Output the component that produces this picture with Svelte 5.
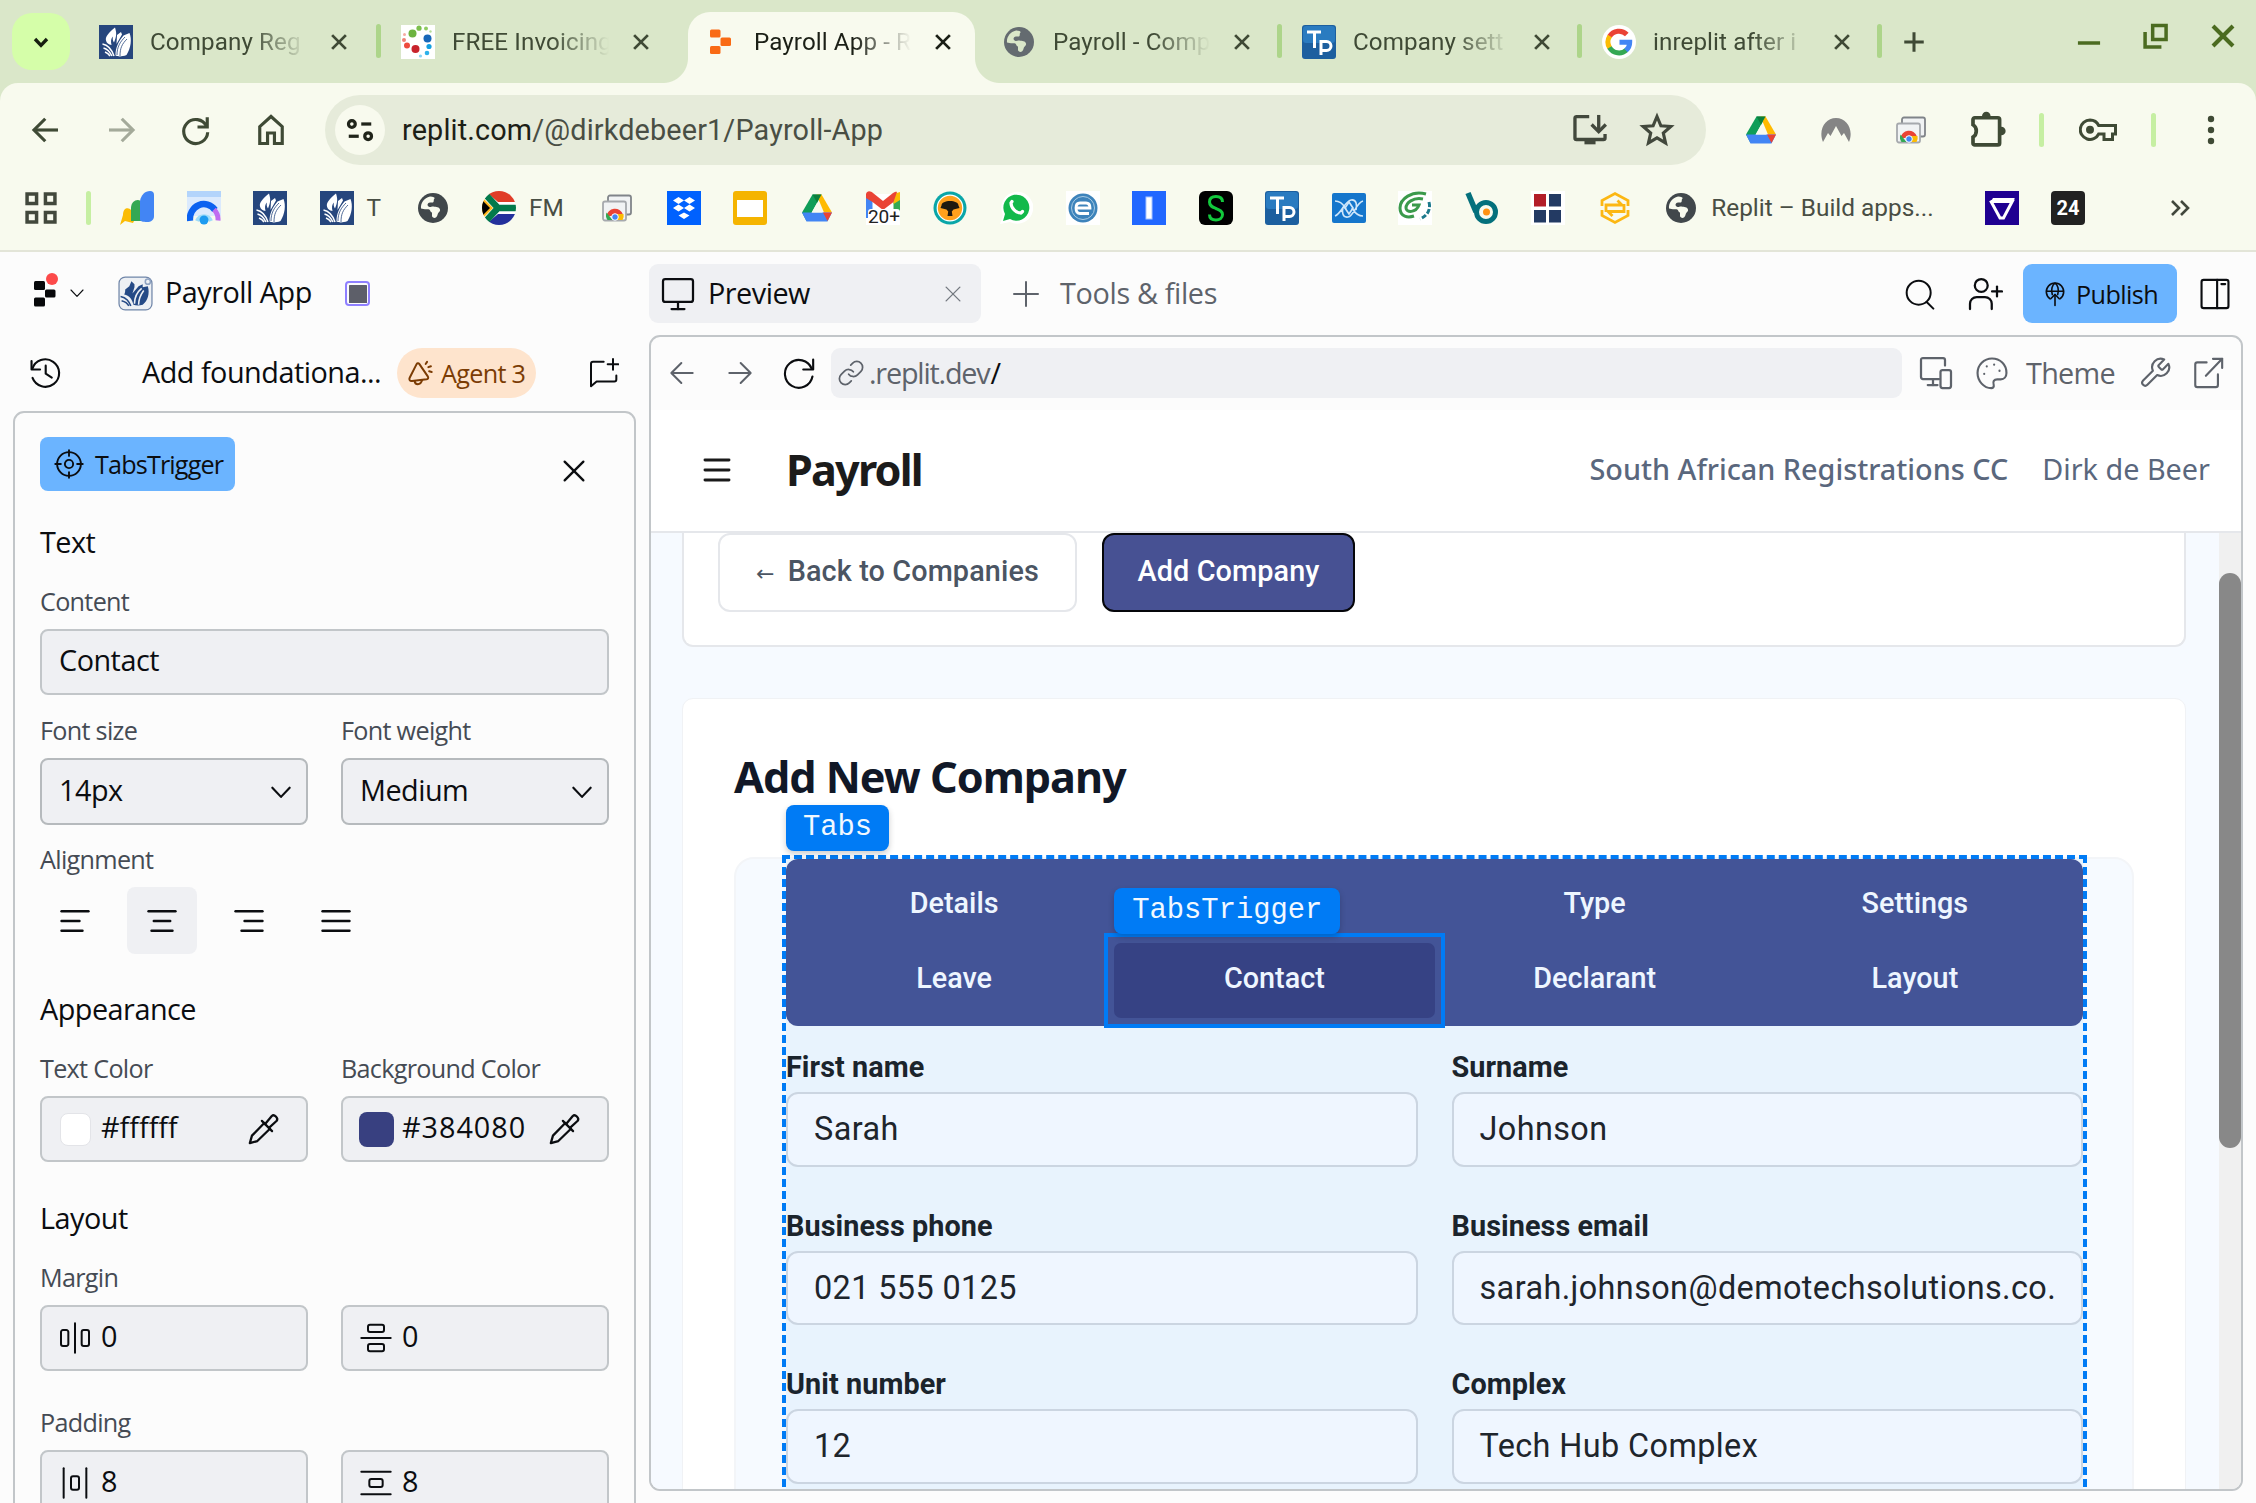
<script>
  const tabs = [
    { icon: 'book', title: 'Company Reg', width: 302 },
    { icon: 'dots', title: 'FREE Invoicing', width: 302 },
    { icon: 'replit', title: 'Payroll App - R', width: 299, active: true },
    { icon: 'globe', title: 'Payroll - Comp', width: 300, tone: 'grey' },
    { icon: 'tp', title: 'Company sett', width: 300 },
    { icon: 'google', title: 'inreplit after i', width: 300 }
  ];

  const bookmarks = [
    { icon: 'ads' },
    { icon: 'rainbow' },
    { icon: 'book' },
    { icon: 'book', label: 'T', size: 'short' },
    { icon: 'globe' },
    { icon: 'flag', label: 'FM', size: 'medium' },
    { icon: 'shots' },
    { icon: 'dropbox' },
    { icon: 'slides' },
    { icon: 'drive' },
    { icon: 'gmail' },
    { icon: 'tree' },
    { icon: 'whatsapp' },
    { icon: 'ering' },
    { icon: 'bar' },
    { icon: 'snake' },
    { icon: 'tp' },
    { icon: 'helix' },
    { icon: 'swirl' },
    { icon: 'bdot' },
    { icon: 'grid4' },
    { icon: 'hex' },
    { icon: 'globe', label: 'Replit – Build apps...', size: 'long' },
    { icon: 'vtri' },
    { icon: 'n24' }
  ];

  const triggers = ['Details', '', 'Type', 'Settings', 'Leave', 'Contact', 'Declarant', 'Layout'];

  const fields = [
    ['First name', 'Sarah'],
    ['Surname', 'Johnson'],
    ['Business phone', '021 555 0125'],
    ['Business email', 'sarah.johnson@demotechsolutions.co.'],
    ['Unit number', '12'],
    ['Complex', 'Tech Hub Complex']
  ];

  // Stroke icons on a 24-unit grid
  const strokes = {
    chevron: ['M4 8l8 8.5L20 8'],
    close: ['M4.5 4.5l15 15', 'M19.5 4.5l-15 15'],
    plus: ['M12 3v18', 'M3 12h18'],
    left: ['M20 12H4.5', 'M11.5 4.5L4 12l7.500 7.500'],
    right: ['M4 12h15.500', 'M12.500 4.500L20 12l-7.500 7.500'],
    history: ['M2.500 3.500v6h6', 'M3 9.200A9.700 9.700 0 1 1 3.200 15.500', 'M12.500 6.800v5.700l4.300 2.700'],
    chat: ['M12.500 3.500H4.500a1.500 1.500 0 0 0-1.500 1.500v17l4.200-3.700h13.300a1.500 1.500 0 0 0 1.500-1.500v-3', 'M19.500 1.500v8', 'M15.500 5.500h8'],
    agent: ['M10.500 4.200l7.300 10.700c.8 1.300.3 2.300-1 2.500l-12.500 1.500c-1.800.2-2.800-1.200-2-2.800L8 4.800c.6-1.200 1.800-1.500 2.500-.6z', 'M6.500 18.800c.3 3.600 5 4.200 6.500-.8', 'M16 4.300l1.200-1.800', 'M18.300 7l2.200-.8', 'M19 10.500l2.200.6'],
    target: ['M12 2.500a9.500 9.500 0 1 0 0 19 9.500 9.500 0 0 0 0-19z', 'M12 8.700a3.300 3.300 0 1 0 0 6.600 3.300 3.300 0 0 0 0-6.600z', 'M12 1v4.500', 'M12 18.500V23', 'M1 12h4.500', 'M18.500 12H23'],
    dropper: ['M12.200 7.800l-8.700 8.900-1.500 5.300 5.300-1.500 8.900-8.700', 'M10.500 6.300l7.200 7.200', 'M12.800 8.500l4.700-5.700c1.700-1.600 4.800 1.400 3.500 3.400l-5.500 5'],
    monitor: ['M3.500 2h17A1.500 1.500 0 0 1 22 3.500v12.300a1.500 1.500 0 0 1-1.500 1.500h-17A1.500 1.500 0 0 1 2 15.800V3.500A1.500 1.500 0 0 1 3.500 2z', 'M12 17.500V22', 'M7.700 22h8.600'],
    refresh: ['M22 2.500v7h-7', 'M21 9A9.800 9.800 0 1 0 21.500 14.500'],
    link: ['M10 13a5 5 0 0 0 7.540.54l3-3a5 5 0 0 0-7.070-7.070l-1.720 1.710', 'M14 11a5 5 0 0 0-7.540-.54l-3 3a5 5 0 0 0 7.070 7.070l1.710-1.710'],
    search: ['M11 2a9 9 0 1 0 0 18 9 9 0 0 0 0-18z', 'M17 18l5 5'],
    invite: ['M9.500 2a4.300 4.300 0 1 0 0 8.600 4.300 4.300 0 0 0 0-8.600z', 'M2 22v-3.500a4.500 4.500 0 0 1 4.500-4.500h5.500a4.500 4.500 0 0 1 4.500 4.500V22', 'M20 7v6.600', 'M16.700 10.300h6.600'],
    panel: ['M4 2h16a1.500 1.500 0 0 1 1.500 1.500v17A1.500 1.500 0 0 1 20 22H4a1.500 1.500 0 0 1-1.500-1.500v-17A1.500 1.500 0 0 1 4 2z', 'M13.500 2v20', 'M16.500 5h2.700'],
    publish: ['M7.500 16.500a8 8 0 1 1 9 0', 'M4.300 9.500h15.400', 'M9.500 12.500C8 8 9.500 3.500 12 2c2.500 1.500 4 6 2.500 10.500', 'M12 22.500v-10', 'M8.300 16.200l3.700-3.700 3.700 3.700'],
    devices: ['M14 16H3.300A1.300 1.300 0 0 1 2 14.700V3.300A1.300 1.300 0 0 1 3.300 2h13.400A1.300 1.300 0 0 1 18 3.300V7', 'M10 16v4', 'M6.500 20h6.500', 'M16.300 10h4.400a1.300 1.300 0 0 1 1.300 1.300v9.400a1.300 1.300 0 0 1-1.300 1.300h-4.400a1.300 1.300 0 0 1-1.300-1.300v-9.400a1.300 1.300 0 0 1 1.300-1.300z'],
    palette: ['M12 1.800C6.300 1.800 1.800 6.300 1.800 12S6.300 22.700 11.500 22.700c1.300 0 2-1 1.700-2.200-.8-2.500.2-4 2.500-4h2.500c2.300 0 4-1.800 4-4.500C22.200 6 17.700 1.800 12 1.800z', 'M8.300 7.200v.2', 'M13.500 6v.2', 'M17.300 10.300v.2', 'M6.500 12.500v.2'],
    wrench: ['M14.700 6.300a1 1 0 0 0 0 1.400l1.600 1.600a1 1 0 0 0 1.400 0l3.770-3.770a6 6 0 0 1-7.940 7.940l-6.910 6.910a2.120 2.120 0 0 1-3-3l6.910-6.910a6 6 0 0 1 7.940-7.940l-3.760 3.760z'],
    external: ['M11 4.500H4.500A1.500 1.500 0 0 0 3 6v14.500A1.500 1.500 0 0 0 4.500 22h13a1.500 1.500 0 0 0 1.500-1.500V13', 'M15.500 2h6.500v6.500', 'M22 2L10.500 14'],
    burger: ['M3 4.500h18', 'M3 12h18', 'M3 19.500h18'],
    alignLeft: ['M3 5.500h18', 'M3 12h12', 'M3 18.500h14'],
    alignCenter: ['M3 5.500h18', 'M6.500 12h11', 'M5 18.500h14'],
    alignRight: ['M3 5.500h18', 'M9 12h12', 'M7 18.500h14'],
    alignJustify: ['M3 5.500h18', 'M3 12h18', 'M3 18.500h18'],
    marginX: ['M3 6h2.500a1.500 1.500 0 0 1 1.500 1.500v9a1.500 1.500 0 0 1-1.500 1.500H3a1.500 1.500 0 0 1-1.500-1.500v-9A1.500 1.500 0 0 1 3 6z', 'M12 1v22', 'M18.500 6H21a1.500 1.500 0 0 1 1.500 1.500v9A1.500 1.500 0 0 1 21 18h-2.500a1.500 1.500 0 0 1-1.500-1.500v-9A1.500 1.500 0 0 1 18.500 6z'],
    marginY: ['M7.500 2h9a1.500 1.500 0 0 1 1.500 1.500V6a1.500 1.500 0 0 1-1.500 1.500h-9A1.500 1.500 0 0 1 6 6V3.500A1.500 1.500 0 0 1 7.500 2z', 'M1 12h22', 'M7.500 16.500h9A1.500 1.500 0 0 1 18 18v2.500a1.500 1.500 0 0 1-1.500 1.500h-9A1.500 1.500 0 0 1 6 20.500V18a1.500 1.500 0 0 1 1.500-1.500z'],
    padX: ['M3.500 1v22', 'M10.500 7h3a1.500 1.500 0 0 1 1.500 1.500v7a1.500 1.500 0 0 1-1.500 1.500h-3A1.500 1.500 0 0 1 9 15.500v-7A1.500 1.500 0 0 1 10.500 7z', 'M20.500 1v22'],
    padY: ['M1 3.500h22', 'M8.500 9h7a1.500 1.500 0 0 1 1.500 1.500v3a1.500 1.500 0 0 1-1.500 1.500h-7A1.500 1.500 0 0 1 7 13.500v-3A1.500 1.500 0 0 1 8.500 9z', 'M1 20.500h22'],
    reload: ['M19.500 3.500v6.500H13', 'M19 9.500A8 8 0 1 0 19.800 13.500'],
    home: ['M4.500 21V9.800L12 3l7.500 6.800V21h-5.200v-7H9.700v7z'],
    tune: ['M5.500 4.500a2.700 2.700 0 1 0 0 5.400 2.700 2.700 0 0 0 0-5.400z', 'M13 7.200h8', 'M18.500 14.200a2.700 2.700 0 1 0 0 5.400 2.700 2.700 0 0 0 0-5.400z', 'M3 17h8'],
    install: ['M11.500 3.500H3.500A1 1 0 0 0 2.500 4.500v12.500a1 1 0 0 0 1 1h17a1 1 0 0 0 1-1v-2.500', 'M8.500 20h7', 'M17.500 2.500v10', 'M13 8.500l4.500 4.500L22 8.500'],
    star: ['M12 3l2.600 6.200 6.600.5-5 4.400 1.500 6.500L12 17.200l-5.700 3.400 1.500-6.500-5-4.400 6.600-.5z'],
    puzzle: ['M5 5h13.200a1 1 0 0 1 1 1v13.500a1 1 0 0 1-1 1H5a1 1 0 0 1-1-1V16c2.500-1.500 2.500-5.500 0-7V6a1 1 0 0 1 1-1z', 'M10.200 4a1.400 1.400 0 0 1 2.800 0z', 'M20.200 11.200a1.400 1.400 0 0 1 0 2.800z'],
    apps: ['M3.200 3.200h6v6h-6z', 'M14.800 3.200h6v6h-6z', 'M3.200 14.800h6v6h-6z', 'M14.800 14.800h6v6h-6z'],
    more: ['M4 5l7 7-7 7', 'M13 5l7 7-7 7'],
    minimize: ['M2.500 18h19'],
    restore: ['M10 3h11.500v12H10z', 'M3.500 8.500v13h14']
  };
</script>

{#snippet line(name, size)}
  <svg class="line {size}" viewBox="0 0 24 24">
    {#each strokes[name] as d}<path {d} />{/each}
  </svg>
{/snippet}

{#snippet fav(kind, tone = '')}
  <svg class="fav {tone}" viewBox="0 0 34 34">
    {#if kind === 'book'}
      <rect width="34" height="34" fill="#26467d" />
      <path fill="#fff" d="M7 15.500c-1-4 3-8 9-13 1.500 5 2 8-1 15-1.500-2-1.500-4-1-6-2 2-2.500 4.500-1.500 8.500-3-.5-5-2-5.500-4.500zM18 10l4-3 1 2.500-5.500 9.500zM24.500 10.500l6-2.500c2.500 6 1.500 15-3 22-5 2-9 1.500-11 .5 0-8 3-14 8-20z" />
      <path fill="none" stroke="#fff" stroke-width="1.500" d="M3.500 19c6 1 9 5 11.500 12M4.500 23c4 1 6.500 4 8.500 8M6 27c2.500 1 4 2.500 5 4" />
      <path fill="none" stroke="#26467d" stroke-width=".8" d="M18 30c0-8 3-13 8-18M21 31c0-8 2-12 7-17" />
    {:else if kind === 'dots'}
      <rect width="34" height="34" fill="#fff" />
      <circle cx="11.500" cy="8.500" r="4" fill="#6cb33f" /><circle cx="26.500" cy="13.500" r="4" fill="#1767b8" />
      <circle cx="14.500" cy="24" r="4" fill="#c8232c" /><circle cx="6" cy="20.500" r="3" fill="#ee4b3d" />
      <circle cx="18" cy="3.200" r="2.600" fill="#7cbf4c" /><circle cx="25" cy="3.500" r="2" fill="#8fcb62" />
      <circle cx="28" cy="21.500" r="2.600" fill="#12a0e0" /><circle cx="26" cy="28" r="2.300" fill="#2cb1ea" />
      <circle cx="19.500" cy="31" r="1.600" fill="#8ad4f3" /><circle cx="3" cy="15" r="2" fill="#f08276" />
      <circle cx="3.500" cy="9.500" r="1.500" fill="#f6aaa2" /><circle cx="29.500" cy="6.500" r="1.200" fill="#b5dd97" />
    {:else if kind === 'replit'}
      <g fill="#f96a14"><rect x="7" y="4.500" width="10.500" height="8" rx="1.500" /><rect x="17.500" y="12.500" width="10.500" height="8.500" rx="1.500" /><rect x="7" y="21" width="10.500" height="8" rx="1.500" /></g>
    {:else if kind === 'globe'}
      <circle class="disc" cx="17" cy="17" r="15" />
      <path class="land" d="M14 5.500c-6 1.500-9.500 6.500-9 12 2 .8 5 .8 7.500.7 2 0 1.500 3 3.500 3.300v3.800c1.500 2.700 4.500 2 5.500-1.300.5-3 3-3 2.500-5.500-.5-2.500-4-2.500-6.500-3-2-.5-2.500 1.200-4.500.3-2.500-1.300-1.500-4 1-4.300h3c1.500-1 0-3 1.500-4 .5-1-1-1.700-4.500-2z" />
    {:else if kind === 'tp'}
      <rect width="34" height="34" rx="3" fill="#1c5f9f" /><rect x="1" y="1" width="32" height="17" rx="3" fill="#2a7bc0" />
      <path fill="none" stroke="#fff" stroke-width="3" d="M5 7h14M12.500 7v16M19 30V16.500h5.500a4.500 4.500 0 0 1 0 9H19" />
    {:else if kind === 'google'}
      <circle cx="17" cy="17" r="17" fill="#fff" />
      <g fill="none" stroke-width="5"><path stroke="#ea4335" d="M24.800 9.500A11 11 0 0 0 7.500 11.500" /><path stroke="#fbbc05" d="M7.800 11A11 11 0 0 0 7.800 23" /><path stroke="#34a853" d="M7.500 22.500a11 11 0 0 0 17 2.500" /><path stroke="#4285f4" d="M24 25.500A11 11 0 0 0 27.700 17.300H17.500" /></g>
    {:else if kind === 'ads'}
      <path fill="#fbbc04" d="M0 34l3-10c0-8 6-8 8-5l4 9-2 4-8-2z" /><path fill="#34a853" d="M11 30V17c0-9 11-11 11-3v16z" /><path fill="#4285f4" d="M20 29V10c1-6 5-10 10-10a4 4 0 0 1 4 4v21c0 4-3 6-7 6s-7-1-7-2z" />
    {:else if kind === 'rainbow'}
      <rect width="34" height="9" fill="#b3d4fb" /><rect y="6" width="34" height="19" fill="#dbeafd" /><path fill="none" stroke="#0b62f0" stroke-width="6.500" d="M3 30a14 15 0 0 1 25-11" /><path fill="none" stroke="#c06cf0" stroke-width="5" d="M27 18.500a14 14 0 0 1 4 11" /><path fill="none" stroke="#9fdcf8" stroke-width="4" d="M10 30a7.500 7.500 0 0 1 14 0" /><circle cx="17" cy="29" r="4.500" fill="#1d9bf0" />
    {:else if kind === 'flag'}
      <clipPath id="round"><circle cx="17" cy="17" r="17" /></clipPath>
      <g clip-path="url(#round)"><rect width="34" height="34" fill="#fff" /><path fill="#e03c27" d="M3 0h31v11H16z" /><path fill="#23309c" d="M3 34h31V23H16z" /><path fill="none" stroke="#037a4b" stroke-width="6.500" d="M2 2l14 15h18M2 32l14-15" /><path fill="#ffb81c" d="M0 6l11 11L0 28z" /><path fill="#000" d="M0 9l8 8-8 8z" /></g>
    {:else if kind === 'shots'}
      <g fill="#f1f3f4" stroke="#808489" stroke-width="1.800"><rect x="8" y="4.500" width="23" height="19" rx="2" /><rect x="3" y="10.500" width="23" height="19" rx="2" stroke="#a6a9ad" /></g>
      <path fill="#ea4335" d="M6.500 25.500a8.500 8.500 0 0 1 16.500-2l-8 1z" /><path fill="#34a853" d="M6.500 21.500l6 7.500H7.500a8 8 0 0 1-1-7.500z" /><path fill="#fbbc04" d="M16 23h7.500a8 8 0 0 1-1 6h-6z" /><circle cx="15" cy="26" r="3.300" fill="#4285f4" stroke="#fff" />
    {:else if kind === 'dropbox'}
      <rect width="34" height="34" fill="#0061fe" /><g fill="#fff"><path d="M11.500 6l5.500 3.500-5.500 3.500L6 9.500zM22.500 6L28 9.500 22.500 13 17 9.500zM11.500 13.500L17 17l-5.500 3.500L6 17zM22.500 13.500L28 17l-5.500 3.500L17 17zM17 21.500l5.500 3-5.500 3.500-5.500-3.500z" /></g>
    {:else if kind === 'slides'}
      <rect width="34" height="34" rx="3" fill="#f5b400" /><rect x="4" y="9" width="26" height="17" fill="#fff" />
    {:else if kind === 'drive'}
      <path fill="#0f9d58" d="M12.500 3.500h9L17 12l-5 9-5.500 9L2 21.500z" /><path fill="#ffba00" d="M16.500 3.500h5L32 21.500h-8z" /><path fill="#0b7f3c" d="M12.500 3.500h9L17 11.500z" /><path fill="#4285f4" d="M2 21.500h30L27.500 30.500h-21z" /><path fill="#ea4335" d="M23 21.500h9l-4.500 8.500z" />
      <path class="hole" d="M17 12l5.300 9.500H11.700z" />
    {:else if kind === 'gmail'}
      <rect y="3" width="34" height="31" fill="#fff" /><path fill="#4285f4" d="M0 5h6.500v22H0z" /><path fill="#34a853" d="M27.500 8H34v18h-6.500z" /><path fill="#fbbc04" d="M27.500 3l6.500-2v8l-6.500 4z" /><path fill="#ea4335" d="M0 3C1-1 5 0 7 2l10 8 10-8c2-1 3-1.500 4-1L27.500 11 17 19 6.500 11 0 7z" />
      <rect x="2" y="18" width="32" height="16" rx="3" fill="#fff" /><text x="18" y="32" text-anchor="middle">20+</text>
    {:else if kind === 'tree'}
      <circle cx="17" cy="17" r="16.500" fill="#0aa6a8" /><circle cx="17" cy="17" r="12.800" fill="#ffa11d" stroke="#fff" stroke-width="1.200" /><path fill="#1f1a10" d="M8.500 14.500c0-3 4-4.500 8.500-4.500s8.500 1.500 8.500 4.500l1 2.500-6 1.500-1.700 2 .7 4.500h-5l.7-4.500-1.700-2-6-1.500z" />
    {:else if kind === 'whatsapp'}
      <path fill="#fff" d="M1 33l3-9A16 16 0 1 1 11 31z" /><path fill="#12b94b" d="M4 30l2-7a13 13 0 1 1 5 5z" /><path fill="none" stroke="#fff" stroke-width="3.200" stroke-linecap="round" d="M12 12c0 5 5 10 10 10M12 12l1-1.500M22 22l1.500-1.500" />
    {:else if kind === 'ering'}
      <rect width="34" height="34" fill="#fff" /><circle cx="17" cy="17" r="14.500" fill="#3d83bb" /><circle cx="17" cy="17" r="11.500" fill="none" stroke="#a9cbe4" /><path fill="none" stroke="#fff" stroke-width="2.800" d="M10 17h14c0-3-1-5-4-5h-6c-3 0-4 2-4 5s1 5.500 4 5.500h9" />
    {:else if kind === 'bar'}
      <rect width="34" height="34" fill="#2167ff" /><rect x="14" y="6" width="6" height="22" fill="#fff" stroke="#a9c5ff" />
    {:else if kind === 'snake'}
      <rect width="34" height="34" rx="6" fill="#000" /><path fill="none" stroke="#12c83c" stroke-width="3" d="M23.500 11c0-4-3-5.500-6.500-5.500s-6.500 1.500-6.500 5.500 3 5 6.500 6.500 6.500 2.500 6.500 6-3 5.500-6.500 5.500-6.500-1.500-6.500-5.500" />
    {:else if kind === 'helix'}
      <rect y="2" width="34" height="30" rx="2" fill="#1576cc" /><g fill="none" stroke="#cfe6fa" stroke-width="1.700"><path d="M3 10c7 0 9 5 11 8M3 25c6-2 10-15 16-16s6 6 5 10M31 10c-7 2-9 15-15 16s-6-6-5-10M31 25c-7 0-9-5-11-8" /><path d="M13 17l4-6 4 6-4 6z" /></g>
    {:else if kind === 'swirl'}
      <rect width="34" height="34" fill="#fff" /><g fill="none" stroke="#3b9a4b" stroke-width="3"><path d="M28 3C14-1 2 8 2 17s8 10 14 8" /><path d="M25 8C15 6 8 12 8 17s10 5 13-3H14" /></g><path fill="none" stroke="#1d7a8c" stroke-width="3" stroke-dasharray="5 2" d="M31 11c2 8-2 14-9 17" />
    {:else if kind === 'bdot'}
      <path fill="none" stroke="#04707c" stroke-width="5.500" d="M3 2l8 19" /><circle cx="21" cy="21" r="9.500" fill="none" stroke="#04707c" stroke-width="5" /><circle cx="21.500" cy="21" r="3.500" fill="#ff9212" />
    {:else if kind === 'grid4'}
      <rect width="34" height="34" fill="#fff" /><rect x="3" y="3" width="12" height="12.500" fill="#b31d28" /><g fill="#233a63"><rect x="18" y="3" width="12" height="12.500" /><rect x="3" y="19" width="12" height="12.500" /><rect x="18" y="19" width="12" height="12.500" /></g>
    {:else if kind === 'hex'}
      <g fill="none" stroke="#fcb713" stroke-width="2.800"><path d="M4 15V9.500l13-7 13 7V15M4 19v5.500l13 7 13-7V19" /><path d="M8 21v-7h16l-4.500-4.500M26 13v7.500H10l4.500 4.500" /></g>
    {:else if kind === 'vtri'}
      <rect width="34" height="34" fill="#1f0091" /><path fill="none" stroke="#fff" stroke-width="3" d="M5.500 9.500L15 27h3.500L28.500 8" /><path fill="#fff" d="M8 7h22l-4.500 5H5z" />
    {:else if kind === 'n24'}
      <rect width="34" height="34" rx="4" fill="#222" /><text class="light" x="17" y="24" text-anchor="middle">24</text>
    {:else if kind === 'nord'}
      <path fill="#858585" d="M4 29C-1 17 6 5 17 5s18 12 13 24l-5-9-2.500 3L17 13l-5.500 10L9 20z" />
    {/if}
  </svg>
{/snippet}

<div class="browser">
  <div class="strip">
    <div class="tab-search">{@render line('chevron', 's18')}</div>
    <div class="tabs">
      {#each tabs as tab}
        <div class="tab" class:active={tab.active} style:width="{tab.width}px">
          {#if tab.active}<i class="flare"></i><i class="flare end"></i>{/if}
          {@render fav(tab.icon, tab.tone)}
          <span class="tab-title">{tab.title}</span>
          {@render line('close', 's22')}
        </div>
      {/each}
    </div>
    <div class="new-tab">{@render line('plus', 's26')}</div>
    <div class="window-controls">
      {@render line('minimize', 's28')}
      {@render line('restore', 's28')}
      {@render line('close', 's32')}
    </div>
  </div>

  <div class="toolbar">
    <div class="nav">
      {@render line('left', 's36')}
      <span class="dim">{@render line('right', 's36')}</span>
      {@render line('reload', 's36')}
      {@render line('home', 's36')}
    </div>
    <div class="omnibox">
      <span class="site">{@render line('tune', 's30')}</span>
      <span class="url"><b>replit.com</b>/@dirkdebeer1/Payroll-App</span>
      {@render line('install', 's38')}
      {@render line('star', 's36')}
    </div>
    <div class="extensions">
      {@render fav('drive')}
      {@render fav('nord')}
      {@render fav('shots')}
      {@render line('puzzle', 's42')}
      <i class="tick"></i>
      <svg class="key" viewBox="0 0 38 28"><path d="M11 4a9.700 9.700 0 1 0 8.700 14H25v5.500h8.500V18h3V9.500H19.700A9.700 9.700 0 0 0 11 4z" /><circle cx="11" cy="13.800" r="4" /></svg>
      <i class="tick"></i>
      <svg class="menu" viewBox="0 0 8 30"><circle cx="4" cy="4" r="3.200" /><circle cx="4" cy="15" r="3.200" /><circle cx="4" cy="26" r="3.200" /></svg>
    </div>
  </div>

  <div class="bookmarks">
    {@render line('apps', 's38')}
    <i class="tick"></i>
    {#each bookmarks as mark}
      <div class="mark {mark.size ?? ''}">
        {@render fav(mark.icon)}
        {#if mark.label}<span>{mark.label}</span>{/if}
      </div>
    {/each}
    <div class="overflow">{@render line('more', 's24')}</div>
  </div>
</div>

<div class="workspace">
  <aside>
    <header class="project">
      <svg class="logo" viewBox="0 0 24 38"><g fill="#07080a"><rect x="0" y="12" width="11" height="9" rx="1.500" /><rect x="11" y="20.500" width="10.500" height="8" rx="1.500" /><rect x="0" y="28.500" width="11" height="9" rx="1.500" /></g><circle cx="18" cy="9.900" r="6" /></svg>
      {@render line('chevron', 's18')}
      <svg class="app-icon" viewBox="0 0 34 34"><rect x="1" y="1" width="32" height="32" rx="6" /><path fill="#254a86" d="M7 13l4-3 2-5 3 3v3l-2 6 6-7 4-2v3l5-1c2 7 0 14-5 18-4 1-7 .5-9 0-1-5-4-9-9-10 1-2 1-3.500 1-5z" /><path fill="none" stroke="#254a86" stroke-width="1.500" d="M2.500 20c6 1 8 5 10 9M3.500 24c4 1 6 3 7 5" /><path fill="none" stroke="#edf0f4" d="M16 27c0-7 2-11 7-15M20 28c0-6 2-10 5-14" /><circle cx="29" cy="5.500" r="2.500" fill="none" stroke="#8fa3c2" /></svg>
      <span class="title">Payroll App</span>
      <i class="stop"></i>
    </header>

    <header class="chat">
      {@render line('history', 's34')}
      <span class="title">Add foundationa...</span>
      <span class="agent">{@render line('agent', 's28')}Agent 3</span>
      {@render line('chat', 's32')}
    </header>

    <section class="inspector">
      <div class="top">
        <span class="element">{@render line('target', 's30')}TabsTrigger</span>
        {@render line('close', 's30')}
      </div>

      <h2>Text</h2>
      <label class="first" for="content">Content</label>
      <div class="box" id="content">Contact</div>
      <div class="pair select">
        <div><label for="size">Font size</label><div class="box" id="size">14px{@render line('chevron', 's26')}</div></div>
        <div><label for="weight">Font weight</label><div class="box" id="weight">Medium{@render line('chevron', 's26')}</div></div>
      </div>
      <label class="alignment" for="align">Alignment</label>
      <div class="align" id="align">
        <span>{@render line('alignLeft', 's36')}</span>
        <span class="on">{@render line('alignCenter', 's36')}</span>
        <span>{@render line('alignRight', 's36')}</span>
        <span>{@render line('alignJustify', 's36')}</span>
      </div>

      <h2>Appearance</h2>
      <div class="pair colors">
        <div><label for="fg">Text Color</label><div class="box" id="fg"><i class="swatch white"></i><span class="hex">#ffffff</span>{@render line('dropper', 's34')}</div></div>
        <div><label for="bg">Background Color</label><div class="box" id="bg"><i class="swatch"></i><span class="hex wide">#384080</span>{@render line('dropper', 's34')}</div></div>
      </div>

      <h2>Layout</h2>
      <label class="first" for="margin">Margin</label>
      <div class="pair" id="margin">
        <div class="box">{@render line('marginX', 's32')}0</div>
        <div class="box">{@render line('marginY', 's32')}0</div>
      </div>
      <label class="padding" for="padding">Padding</label>
      <div class="pair" id="padding">
        <div class="box">{@render line('padX', 's32')}8</div>
        <div class="box">{@render line('padY', 's32')}8</div>
      </div>
    </section>
  </aside>

  <main>
    <header class="panes">
      <div class="pane-tab">{@render line('monitor', 's36')}<span>Preview</span>{@render line('close', 's22')}</div>
      <div class="tools">{@render line('plus', 's32')}<span>Tools &amp; files</span></div>
      <div class="actions">
        {@render line('search', 's32')}
        {@render line('invite', 's36')}
        <span class="publish">{@render line('publish', 's26')}Publish</span>
        {@render line('panel', 's34')}
      </div>
    </header>

    <div class="preview">
      <div class="address-bar">
        {@render line('left', 's32')}
        {@render line('right', 's32')}
        <span class="dark">{@render line('refresh', 's34')}</span>
        <div class="address">{@render line('link', 's28')}<span>.replit.dev</span><b>/</b></div>
        {@render line('devices', 's36')}
        {@render line('palette', 's34')}
        <span class="theme">Theme</span>
        {@render line('wrench', 's34')}
        {@render line('external', 's34')}
      </div>

      <div class="app-header">
        {@render line('burger', 's32')}
        <h1>Payroll</h1>
        <span class="company">South African Registrations CC</span>
        <span>Dirk de Beer</span>
      </div>

      <div class="viewport">
        <div class="page">
          <div class="toolbar-card">
            <span class="btn"><em>←</em>Back to Companies</span>
            <span class="btn primary">Add Company</span>
          </div>
          <div class="form-card">
            <h1>Add New Company</h1>
            <div class="tab-card">
              <div class="tab-root">
                <div class="tab-list">
                  {#each triggers as name}
                    <div class="trigger" class:selected={name === 'Contact'}>{name}
                      {#if name === 'Contact'}
                        <i class="outline"></i><span class="tag">TabsTrigger</span>
                      {/if}
                    </div>
                  {/each}
                </div>
                <div class="fields">
                  {#each fields as [label, value], i}
                    <div class="field"><label for="field{i}">{label}</label><div class="input" id="field{i}">{value}</div></div>
                  {/each}
                </div>
                <i class="root-outline"></i>
                <span class="tag root-tag">Tabs</span>
              </div>
            </div>
          </div>
        </div>
        <div class="scrollbar"><i></i></div>
      </div>
    </div>
  </main>
</div>

<style>
  :global(body) { overflow: hidden; background: #fcfcfc; }
  :global(#app) { width: 2256px; height: 1503px; overflow: hidden; display: flex; flex-direction: column; }
  :global(*) { box-sizing: border-box; }

  svg { display: block; flex: none; }
  .line { fill: none; stroke: currentColor; stroke-width: 1.5; stroke-linecap: round; stroke-linejoin: round; }
  .s18 { width: 18px; height: 18px; }
  .s22 { width: 22px; height: 22px; }
  .s24 { width: 24px; height: 24px; }
  .s26 { width: 26px; height: 26px; }
  .s28 { width: 28px; height: 28px; }
  .s30 { width: 30px; height: 30px; }
  .s32 { width: 32px; height: 32px; }
  .s34 { width: 34px; height: 34px; }
  .s36 { width: 36px; height: 36px; }
  .s38 { width: 38px; height: 38px; }
  .s42 { width: 42px; height: 42px; }

  /* Browser chrome */
  .browser { height: 252px; flex: none; background: #dae7c9; border-bottom: 2px solid #e3e5d8; font-family: Roboto, sans-serif; color: #3f4a35; display: flex; flex-direction: column; }
  .fav { width: 34px; height: 34px; }
  .fav text { font: 19px Roboto, sans-serif; fill: #222; }
  .fav text.light { font: 700 20px Roboto, sans-serif; fill: #fff; }
  .disc { fill: #41474b; }
  .grey .disc { fill: #646b70; }
  .land { fill: #f8faee; }
  .grey .land { fill: #dae7c9; }
  .hole { fill: #f8faee; }

  .strip { height: 83px; flex: none; display: flex; align-items: center; }
  .tab-search { width: 58px; height: 57px; margin-left: 12px; border-radius: 20px; background: #d5fea9; color: #171f10; display: grid; place-items: center; }
  .tab-search .line { stroke-width: 4.5; stroke-linecap: butt; stroke-linejoin: miter; }
  .tabs { display: flex; height: 83px; margin-left: 13px; }
  .tab { position: relative; display: flex; align-items: center; padding-left: 16px; flex: none; }
  .tab::after { content: ''; position: absolute; right: 4px; top: 24px; width: 5px; height: 34px; border-radius: 3px; background: #add58a; }
  .tab:nth-child(2)::after, .active::after { display: none; }
  .tab-title { position: relative; width: 162px; margin: 0 16px 0 17px; font-size: 24.2px; letter-spacing: 0.1px; line-height: 40px; white-space: nowrap; -webkit-mask: linear-gradient(90deg, #000 62%, transparent 97%); mask: linear-gradient(90deg, #000 62%, transparent 97%); }
  .tab .line { stroke-width: 3; stroke-linecap: butt; }
  .tab svg { position: relative; }
  .active { color: #1b1f16; }
  .active::before { content: ''; position: absolute; left: 1px; top: 12px; width: 287px; height: 71px; border-radius: 22px 22px 0 0; background: #f8faee; }
  .flare { position: absolute; left: -24px; bottom: 0; width: 25px; height: 25px; background: radial-gradient(circle at 0 0, transparent 24.5px, #f8faee 25.5px); }
  .flare.end { left: 288px; background: radial-gradient(circle at 100% 0, transparent 24.5px, #f8faee 25.5px); }
  .new-tab { margin-left: 15px; }
  .new-tab .line { stroke-width: 2.8; stroke-linecap: butt; }
  .window-controls { margin-left: auto; display: flex; gap: 38px; align-items: center; padding: 0 17px 12px 0; color: #4b6b20; }
  .window-controls .line { stroke-width: 3; stroke-linecap: butt; stroke-linejoin: miter; }

  .toolbar { height: 94px; flex: none; background: #f8faee; border-radius: 18px 18px 0 0; display: flex; align-items: center; padding-left: 28px; }
  .toolbar .line { stroke-width: 2.1; stroke-linecap: butt; stroke-linejoin: miter; }
  .nav { display: flex; gap: 39px; width: 297px; }
  .dim { opacity: 0.45; }
  .omnibox { width: 1381px; height: 70px; border-radius: 35px; background: #e6ebda; display: flex; align-items: center; padding: 0 31px 0 10px; flex: none; }
  .site { width: 50px; height: 50px; border-radius: 50%; background: #f8faee; color: #20241a; display: grid; place-items: center; }
  .site .line { stroke-width: 2.6; }
  .url { flex: 1; margin-left: 17px; font-size: 28.8px; letter-spacing: 0.15px; color: #494e44; }
  .url b { font-weight: 400; color: #1c2016; }
  .omnibox > .line { color: #42483c; }
  .omnibox .s36 { margin-left: 30px; }
  .extensions { display: flex; align-items: center; gap: 41px; padding-left: 38px; }
  .extensions .s42 { margin: 0 -10px 0 -3px; }
  .tick { width: 5px; height: 34px; border-radius: 3px; background: #c6efa2; flex: none; }
  .key { width: 38px; height: 28px; margin: 0 -7px 0 -6px; fill: none; stroke: #3f4a35; stroke-width: 3; }
  .key circle { fill: #3f4a35; stroke: none; }
  .menu { width: 8px; height: 30px; margin-left: 10px; fill: #3f4a35; }

  .bookmarks { flex: 1; background: #f8faee; display: flex; align-items: flex-start; padding: 14px 0 0 22px; gap: 32.5px; }
  .bookmarks > .line { margin: -2px -6px 0 0; stroke-width: 2.2; color: #42483c; stroke-linecap: butt; stroke-linejoin: miter; }
  .bookmarks > .tick { margin: 0 -3px 0 -1px; }
  .mark { width: 34px; display: flex; align-items: center; gap: 13px; font-size: 24.4px; white-space: nowrap; color: #494e44; flex: none; }
  .mark span { line-height: 34px; }
  .short { width: 63.6px; }
  .medium { width: 85.6px; }
  .long { width: 288px; }
  .overflow { margin: 5px 0 0 50px; color: #42483c; }
  .overflow .line { stroke-width: 2.6; stroke-linecap: butt; stroke-linejoin: miter; }

  /* Workspace */
  .workspace { flex: 1; display: flex; min-height: 0; background: #fcfcfc; font-family: 'Open Sans', sans-serif; font-size: 28.8px; letter-spacing: -0.5px; color: #0b0d10; }
  aside { width: 649px; padding-left: 13px; display: flex; flex-direction: column; flex: none; }
  .project { height: 82px; flex: none; display: flex; align-items: center; padding-left: 21px; }
  .logo { width: 24px; height: 38px; margin: -10px 10px 0 0; }
  .logo circle { fill: #fc4a4a; }
  .app-icon { width: 35px; height: 35px; margin: 0 12px 0 32px; fill: #edf0f4; stroke-width: 1.5; }
  .app-icon rect { stroke: #6f85a8; stroke-width: 1.2; }
  .project .title { width: 180px; line-height: 40px; margin-top: -2px; }
  .stop { width: 25px; height: 25px; border: 2px solid #8f80ff; border-radius: 4px; background: #5d5f69; background-clip: content-box; padding: 1.5px; }
  .chat { height: 77px; display: flex; align-items: center; padding-left: 15px; flex: none; }
  .chat .title { margin: -2px 0 0 80px; width: 255px; line-height: 40px; }
  .agent { width: 139px; height: 50px; border-radius: 25px; background: #fee4cd; color: #7b3c04; display: flex; align-items: center; gap: 6px; padding-left: 10px; font-size: 25.2px; letter-spacing: -0.7px; margin-right: 51px; white-space: nowrap; }
  .agent .line { stroke-width: 1.7; }

  .inspector { width: 623px; height: 1140px; border: 2px solid #c2c6c9; border-radius: 11px; padding: 24px 25px 0; flex: none; }
  .top { display: flex; justify-content: space-between; align-items: center; padding-right: 20px; }
  .top > .line { margin-top: 14px; stroke-width: 1.8; }
  .element { width: 195px; height: 54px; border-radius: 8px; background: #6bb4ff; display: flex; align-items: center; gap: 11px; padding-left: 14px; font-size: 25.2px; letter-spacing: -0.85px; }
  h2 { margin: 31px 0 0; font-size: 28.8px; font-weight: 400; line-height: 40px; }
  label { display: block; font-size: 25.2px; line-height: 36px; letter-spacing: -0.7px; color: #454b54; }
  .first { margin: 21px 0 10px; }
  .box { height: 66px; border: 2px solid #c2c6c9; border-radius: 8px; background: #eff0f3; display: flex; align-items: center; padding: 0 0 5px 17px; }
  .pair { display: grid; grid-template-columns: 268px 268px; justify-content: space-between; }
  .select { margin-top: 17px; }
  .select .box { height: 67px; margin-top: 10px; border-color: #b6babd; justify-content: space-between; padding-right: 12px; }
  .select .box .line { margin-top: 5px; stroke-width: 2; }
  .alignment { margin: 16px 0 10px; }
  .align { display: flex; gap: 17px; }
  .align span { width: 70px; height: 67px; border-radius: 8px; display: grid; place-items: center; }
  .align .on { background: #eff0f3; }
  .align .line { stroke-width: 1.6; }
  .align + h2 { margin-top: 35px; }
  .colors { margin-top: 21px; }
  .colors .box { margin-top: 10px; padding: 0 25px 0 16px; }
  .swatch { width: 35px; height: 35px; border-radius: 8px; background: #384080; }
  .swatch.white { width: 31px; height: 33px; margin: 0 2px; background: #fff; border: 1px solid #e3e4e8; }
  .hex { flex: 1; margin-left: 8px; line-height: 56px; padding-bottom: 4px; letter-spacing: 0; }
  .hex.wide { letter-spacing: 0.95px; }
  .colors .line { stroke-width: 1.6; }
  .colors + h2 { margin-top: 36px; }
  .padding { margin: 33px 0 10px; }
  .pair > .box { gap: 10px; }
  .pair > .box .line { margin-top: 5px; stroke-width: 1.5; }

  main { width: 1594px; display: flex; flex-direction: column; flex: none; }
  .panes { height: 83px; flex: none; display: flex; align-items: center; }
  .panes span { margin-top: -2px; }
  .pane-tab { width: 332px; height: 59px; border-radius: 9px; background: #eff0f3; display: flex; align-items: center; padding: 0 17px 0 11px; }
  .pane-tab span { margin-left: 12px; flex: 1; }
  .pane-tab .s22 { color: #747981; stroke-width: 1.5; }
  .tools { display: flex; align-items: center; color: #5e636b; margin-left: 29px; gap: 18px; letter-spacing: -0.35px; }
  .actions { margin-left: auto; display: flex; align-items: center; padding-right: 11px; }
  .actions .s36 { margin: 0 20px 0 31px; }
  .panes .publish { width: 154px; height: 59px; border-radius: 9px; background: #6bb4ff; display: flex; align-items: center; gap: 8px; padding-left: 19px; margin: 0 21px 0 0; font-size: 25.2px; letter-spacing: -0.6px; }

  .preview { height: 1156px; flex: none; border: 2px solid #c2c6c9; border-radius: 11px; overflow: hidden; display: flex; flex-direction: column; }
  .address-bar { height: 73px; flex: none; display: flex; align-items: center; color: #5e636b; padding: 0 16px 1px 15px; }
  .address-bar .s32 { margin-right: 26px; }
  .dark { color: #0b0d10; margin-right: 15px; }
  .address { width: 1072px; height: 50px; border-radius: 9px; background: #eff0f3; display: flex; align-items: center; padding-left: 6px; margin-right: 16px; letter-spacing: -1.2px; }
  .address span { margin: -1px 0 0 4px; }
  .address b { font-weight: 400; color: #0b0d10; margin: -1px 0 0 1px; }
  .address .line { stroke-width: 1.4; }
  .address-bar > .s36 { margin-right: 21px; }
  .theme { margin: -2px 23px 0 17px; letter-spacing: -0.7px; }
  .theme + .line { margin-right: 19px; }
  .address-bar .line { stroke-width: 1.5; }

  .app-header { height: 123px; flex: none; background: #fff; border-bottom: 2px solid #e5e7eb; display: flex; align-items: center; padding: 0 31px 2px 50px; font-family: 'Noto Sans', sans-serif; letter-spacing: 0; color: #5a677d; }
  .app-header .line { color: #1a1a1a; stroke-width: 2.2; }
  .app-header span { margin-bottom: 2px; }
  h1 { margin: 0; font-size: 43.2px; line-height: 60px; font-weight: 700; }
  .app-header h1 { margin: 0 auto 0 53px; color: #1b1b1b; letter-spacing: -1.8px; }
  .app-header .company { font-weight: 500; margin-right: 34px; }

  .viewport { flex: 1; display: flex; min-height: 0; font-family: Roboto, sans-serif; letter-spacing: 0; }
  .page { flex: 1; background: #f6faff; padding: 0 33px 0 31px; overflow: hidden; }
  .toolbar-card { height: 114px; background: #fff; border: 2px solid #e5e7eb; border-top: 0; border-radius: 0 0 11px 11px; padding-left: 34px; display: flex; gap: 25px; }
  .btn { width: 359px; height: 79px; border: 2px solid #e5e7eb; border-radius: 12px; display: flex; align-items: center; justify-content: center; padding-bottom: 3px; font-weight: 500; color: #4b5563; letter-spacing: 0.12px; }
  .btn em { font: 500 22px 'DejaVu Sans', sans-serif; margin: 5px 13px 0 0; }
  .primary { width: 253px; background: #475193; border-color: #05060a; color: #fff; }
  .form-card { margin-top: 51px; height: 900px; background: #fff; border: 1px solid #f0f2f5; border-radius: 11px; padding: 48px 51px 0; }
  .form-card h1 { font-family: 'Noto Sans', sans-serif; color: #111827; letter-spacing: -1px; }
  .tab-card { margin-top: 50px; height: 800px; background: #f6faff; border: 2px solid #f3f5f8; border-radius: 20px 20px 0 0; padding: 0 49px 0 50px; }
  .tab-root { position: relative; height: 760px; background: #e8f3fd; }
  .tab-list { height: 167px; border-radius: 12px; background: #435497; display: grid; grid-template: 75px 75px / repeat(4, 1fr); padding: 9px 8px; }
  .trigger { position: relative; display: flex; align-items: center; justify-content: center; padding-bottom: 5px; font-weight: 500; color: #eef6ff; border-radius: 7px; }
  .selected { background: #364284; }
  .outline { position: absolute; inset: -10px -10px; border: 4px solid #007bf5; }
  .tag { position: absolute; left: 0; top: -55px; height: 46px; border-radius: 8px; background: #007bf5; color: #f2f8ff; padding: 0 18px; font: 28.8px/46px 'Liberation Mono', monospace; box-shadow: 0 3px 6px rgba(0, 0, 0, 0.2); }
  .root-tag { top: -54px; padding: 0 17px; line-height: 45px; }
  .root-outline { position: absolute; inset: -4px -4px -60px; border: 4px dashed #007bf5; }
  .fields { display: grid; grid-template-columns: minmax(0, 1fr) minmax(0, 1fr); column-gap: 34px; padding-top: 21px; }
  .field { height: 158.5px; }
  .field label { font-size: 28.8px; line-height: 40px; font-weight: 700; letter-spacing: 0.07px; color: #1b242c; }
  .input { height: 74.5px; margin-top: 5px; border: 2px solid #cbd5e1; border-radius: 12px; background: #eff6ff; padding: 0 0 0 26px; font-size: 32.4px; line-height: 71px; letter-spacing: 0.4px; color: #1e252c; white-space: nowrap; }
  .scrollbar { width: 22px; background: #f0f0f0; padding-top: 40px; }
  .scrollbar i { display: block; height: 575px; border-radius: 11px; background: #888; }
</style>
